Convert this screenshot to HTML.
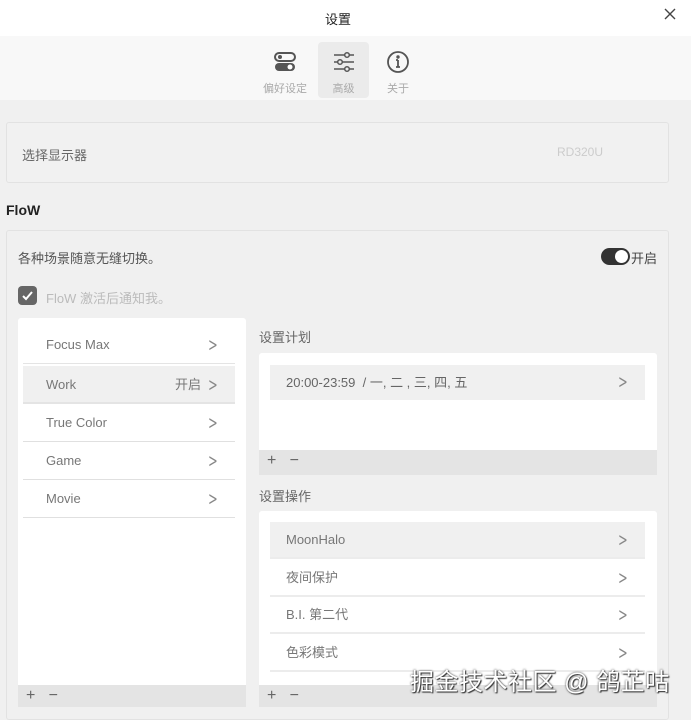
<!DOCTYPE html>
<html><head><meta charset="utf-8"><style>
*{margin:0;padding:0;box-sizing:border-box}
body{width:691px;height:713px;overflow:hidden;background:#f0f0f0;font-family:"Liberation Sans","Noto Sans CJK SC",sans-serif;color:#555;position:relative;font-size:13px}
.abs{position:absolute}
.top{left:0;top:0;width:691px;height:36px;background:#fff}
.tabs{left:0;top:36px;width:691px;height:64px;background:#f8f8f8}
.tab{top:42px;width:52px;height:56px;text-align:center;font-size:11px;color:#aaa}
.card{left:6px;top:122px;width:663px;height:61px;border:1px solid #e2e2e2;border-radius:3px;background:#f1f1f1}
.panel{left:6px;top:230px;width:663px;height:490px;border:1px solid #e2e2e2;border-radius:3px}
.white{background:#fff;border-radius:3px}
.foot{background:#e4e4e4;height:22px;font-size:16px;color:#666;padding-left:8px;line-height:22px}
.row{position:absolute;left:5px;right:11px;height:38px;line-height:38px;padding-left:23px;color:#777;border-bottom:1px solid #e0e0e0}
.ch{position:absolute;right:14px;top:0;color:#888;font-size:19px;font-family:"DejaVu Sans",sans-serif;transform:scaleX(0.6)}
.chw{position:absolute;right:34px;top:0;color:#777}
.rrow{position:absolute;left:11px;right:12px;height:37px;line-height:36px;padding-left:16px;color:#777;border-bottom:2px solid #ececec}
</style></head><body>
<div class="abs top"><div class="abs" style="left:325px;top:9px;font-size:13px;color:#222">设置</div>
<svg class="abs" style="left:664px;top:8px" width="12" height="12" viewBox="0 0 12 12"><path d="M1 1L11 11M11 1L1 11" stroke="#444" stroke-width="1.4"/></svg></div>
<div class="abs tabs"></div>
<div class="abs tab" style="left:259px"><svg width="24" height="24" viewBox="0 0 24 24" style="margin-top:8px"><rect x="2" y="3" width="20" height="8" rx="4" fill="none" stroke="#555" stroke-width="2"/><circle cx="7" cy="7" r="2" fill="#555"/><rect x="2" y="13" width="20" height="8" rx="4" fill="#555"/><circle cx="17" cy="17" r="2.5" fill="#fff"/></svg><div style="margin-top:3px">偏好设定</div></div>
<div class="abs tab" style="left:318px;background:#ebebeb;border-radius:4px;width:51px"><svg width="24" height="24" viewBox="0 0 24 24" style="margin-top:8px" fill="none" stroke="#555" stroke-width="1.5"><path d="M2 5h20M2 12h20M2 19h20"/><circle cx="15" cy="5" r="2.3" fill="#ebebeb"/><circle cx="8" cy="12" r="2.3" fill="#ebebeb"/><circle cx="15" cy="19" r="2.3" fill="#ebebeb"/></svg><div style="margin-top:3px">高级</div></div>
<div class="abs tab" style="left:372px"><svg width="24" height="24" viewBox="0 0 24 24" style="margin-top:8px" fill="none" stroke="#555" stroke-width="1.8"><circle cx="12" cy="12" r="10"/><path d="M12 10v7M10 17h4M10 10h2"/><circle cx="12" cy="7" r="0.8" fill="#555"/></svg><div style="margin-top:3px">关于</div></div>
<div class="abs card"><div class="abs" style="left:15px;top:22px;color:#666">选择显示器</div><div class="abs" style="left:550px;top:22px;color:#ccc;font-size:12px">RD320U</div></div>
<div class="abs" style="left:6px;top:202px;font-weight:bold;color:#222;font-size:14px">FloW</div>
<div class="abs panel"></div>
<div class="abs" style="left:18px;top:248px;color:#555">各种场景随意无缝切换。</div>
<div class="abs" style="left:601px;top:248px;width:29px;height:17px;border-radius:9px;background:#333"><div style="position:absolute;right:2px;top:2px;width:13px;height:13px;border-radius:50%;background:#fff"></div></div>
<div class="abs" style="left:631px;top:248px;color:#444">开启</div>
<div class="abs" style="left:18px;top:286px;width:19px;height:19px;border-radius:4px;background:#666"><svg width="19" height="19" viewBox="0 0 19 19"><path d="M5 10l3 3 6-7" fill="none" stroke="#fff" stroke-width="2"/></svg></div>
<div class="abs" style="left:46px;top:288px;color:#bbb">FloW 激活后通知我。</div>
<div class="abs white" style="left:18px;top:318px;width:228px;height:389px">
<div class="row" style="top:8px;border-bottom-color:#e4e4e4">Focus Max<span class="ch">&gt;</span></div>
<div class="row" style="top:48px;background:#f0f0f0;border-bottom:2px solid #e4e4e4">Work<span class="chw">开启</span><span class="ch">&gt;</span></div>
<div class="row" style="top:86px">True Color<span class="ch">&gt;</span></div>
<div class="row" style="top:124px">Game<span class="ch">&gt;</span></div>
<div class="row" style="top:162px">Movie<span class="ch">&gt;</span></div>
<div class="abs foot" style="left:0;top:367px;width:228px">+ &nbsp;&nbsp;−</div>
</div>
<div class="abs" style="left:259px;top:327px;color:#666">设置计划</div>
<div class="abs white" style="left:259px;top:353px;width:398px;height:122px">
<div class="rrow" style="top:12px;background:#f0f0f0;height:35px;border:0;line-height:35px;color:#666">20:00-23:59 &nbsp;/ 一, 二 , 三, 四, 五<span class="ch">&gt;</span></div>
<div class="abs foot" style="left:0;top:97px;width:398px;height:25px">+ &nbsp;&nbsp;−</div>
</div>
<div class="abs" style="left:259px;top:486px;color:#666">设置操作</div>
<div class="abs white" style="left:259px;top:511px;width:398px;height:196px">
<div class="rrow" style="top:11px;background:#f0f0f0">MoonHalo<span class="ch">&gt;</span></div>
<div class="rrow" style="top:49px">夜间保护<span class="ch">&gt;</span></div>
<div class="rrow" style="top:86px">B.I. 第二代<span class="ch">&gt;</span></div>
<div class="rrow" style="top:124px">色彩模式<span class="ch">&gt;</span></div>
<div class="abs foot" style="left:0;top:174px;width:398px">+ &nbsp;&nbsp;−</div>
</div>
<div class="abs" style="left:410px;top:662px;font-size:24px;letter-spacing:0.5px;color:#fff;text-shadow:0 0 2px #333,1px 1px 1px #333">掘金技术社区 @ 鸽芷咕</div>
</body></html>
